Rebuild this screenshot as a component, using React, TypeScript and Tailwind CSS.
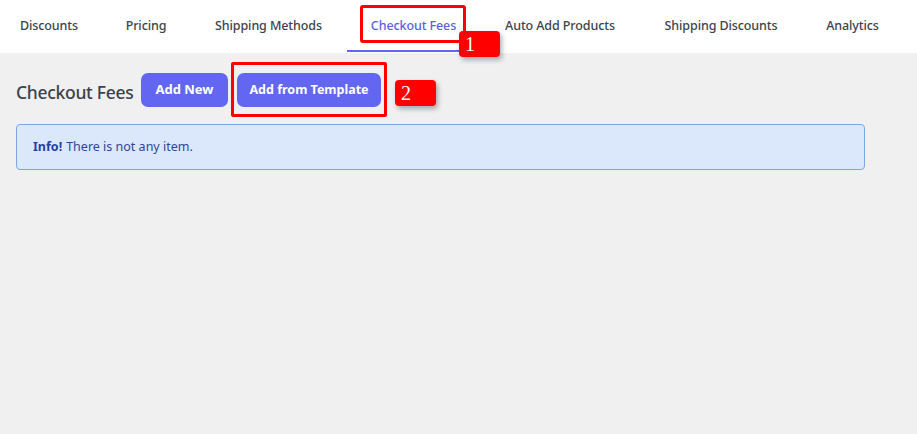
const tabs = [
  { label: 'Discounts', w: 'w-[106px]' },
  { label: 'Pricing', w: 'w-[88px]' },
  { label: 'Shipping Methods', w: 'w-[157px]' },
  { label: 'Checkout Fees', w: 'w-[133px]' },
  { label: 'Auto Add Products', w: 'w-[160px]' },
  { label: 'Shipping Discounts', w: 'w-[162px]' },
  { label: 'Analytics', w: 'w-[101px]' },
];

// red numbered badge used by the screenshot annotations
function Marker({ n, className }: { n: string; className: string }) {
  return (
    <span
      className={`absolute flex h-[26px] w-[41px] items-center rounded-[4px] bg-[#ff0000] pl-[6px] text-[20px] leading-none text-white shadow-[2px_3px_5px_rgba(0,0,0,0.3)] ${className}`}
      style={{ fontFamily: '"Liberation Serif", serif' }}
    >
      {n}
    </span>
  );
}

export default function App() {
  return (
    <div
      className="relative min-h-[434px] w-full bg-[#f0f0f1] text-[#3c434a]"
      style={{ fontFamily: '"Noto Sans", "Open Sans", sans-serif' }}
    >
      {/* Tabs */}
      <div className="h-[53px] bg-white">
        <nav className="-ml-1 flex h-full">
          {tabs.map(({ label, w }) => {
            const active = label === 'Checkout Fees';
            return (
              <div
                key={label}
                className={`relative flex h-full shrink-0 items-center justify-center whitespace-nowrap pb-[1px] text-[12.5px] font-medium tracking-[-0.1px] ${w} ${
                  active ? 'text-[#5d5fd8]' : 'text-[#3c434a]'
                }`}
              >
                {label}
                {active && (
                  <span className="absolute bottom-[1px] left-0 right-0 h-[2px] bg-[#6366f1]" />
                )}
                {active && (
                  <>
                    <span className="absolute left-[13px] right-[14px] top-[5px] h-[38px] rounded-[3px] border-[3px] border-[#ff0000]" />
                    <Marker n="1" className="left-[112px] top-[31px]" />
                  </>
                )}
              </div>
            );
          })}
        </nav>
      </div>

      {/* Content */}
      <div className="px-4 pt-5">
        <div className="flex items-center gap-2">
          <h1 className="mt-[4px] w-[117px] whitespace-nowrap text-[17.5px] font-medium tracking-[-0.3px] text-[#3c434a]">
            Checkout Fees
          </h1>
          <button className="h-[34px] w-[87px] rounded-[7px] bg-[#6366f1] text-[13px] font-bold text-white">
            Add New
          </button>
          <div className="relative ml-[1px]">
            <button className="h-[34px] w-[144px] whitespace-nowrap rounded-[7px] bg-[#6366f1] text-[12.5px] font-bold text-white">
              Add from Template
            </button>
            <span className="absolute -left-[6px] -right-[6px] -top-[11px] -bottom-[10px] rounded-[2px] border-[3px] border-[#ff0000]" />
            <Marker n="2" className="left-[158px] top-[7px]" />
          </div>
        </div>

        <div className="mt-[17px] flex h-[46px] w-[849px] items-center rounded-[4px] border border-[#7aa7e3] bg-[#dbe8fc] px-4 text-[12.5px]">
          <span className="font-bold text-[#273ea5]">Info!</span>
          <span className="ml-1 text-[#2f4596]">There is not any item.</span>
        </div>
      </div>
    </div>
  );
}
